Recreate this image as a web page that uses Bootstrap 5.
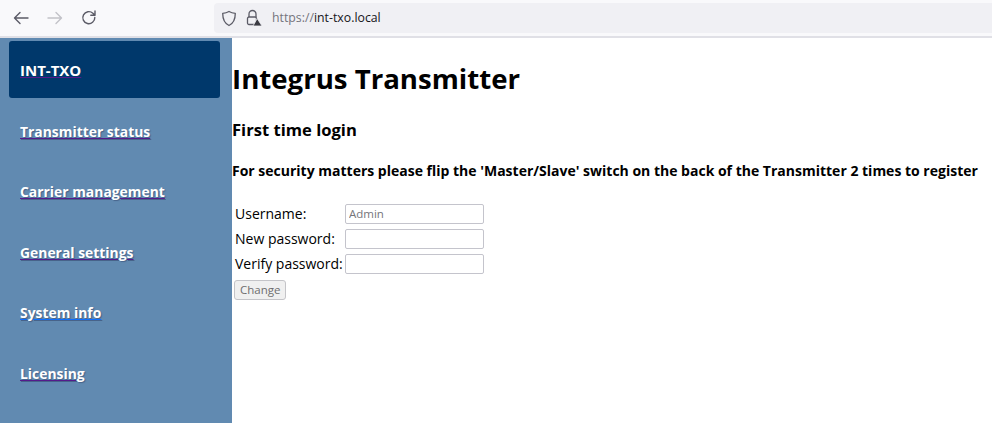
<!DOCTYPE html>
<html lang="en">
  <head>
    <meta charset="UTF-8" />
    <meta name="viewport" content="width=device-width, initial-scale=1" />
    <title>Integrus Transmitter</title>
    <link href="https://cdn.jsdelivr.net/npm/bootstrap@5.3.0/dist/css/bootstrap.min.css" rel="stylesheet" />
    <style>
      /* Overall page and font */
      html, body {
        height: 100%;
        overflow: hidden;
      }
      body {
        background: #fff;
        color: #000;
        font-family: "Open Sans", "Noto Sans", "Liberation Sans", sans-serif;
      }

      /* Browser toolbar on top */
      .browser-bar {
        height: 38px;
        background: #f9f9fb;
        border-bottom: 2px solid #e0e0e6;
        padding-left: 12px;
      }
      .tool-btn {
        width: 18px;
        height: 18px;
        margin-right: 16px;
        flex: none;
      }
      .url-box {
        margin-left: 100px;
        height: 30px;
        flex: 1;
        background: #f0f0f4;
        border-radius: 4px 0 0 4px;
        padding-left: 7px;
        font-size: 12.3px;
      }
      .url-box .scheme {
        color: #74747c;
      }
      .url-box .host {
        color: #15141a;
      }
      .lock-icon {
        margin-right: 10px;
      }

      /* Sidebar */
      .side-col {
        width: 232px;
        background: #618ab1;
        padding: 3px 12px 0 9px;
      }
      .brand-box {
        height: 57px;
        background: #00386b;
        border-radius: 3px;
        padding: 1px 0 0 11px;
      }
      .side-link {
        color: #fff;
        font-size: 13.9px;
        font-weight: 700;
        text-decoration-color: #551a8b;
        text-decoration-thickness: 1px;
        text-shadow: 1px 1px 1px rgba(40, 50, 90, 0.45);
      }
      .side-link:hover {
        color: #fff;
      }
      .brand-box .side-link {
        font-size: 15px;
        text-shadow: none;
      }
      .side-link.fresh {
        text-decoration-color: #0d6efd;
      }
      .side-item {
        height: 60.5px;
        padding-left: 11px;
      }
      .side-list {
        padding-top: 4px;
      }

      /* Main content */
      .main-col {
        flex: 1;
        min-width: 0;
      }
      .main-col h1 {
        font-size: 27.6px;
        font-weight: 700;
        margin: 22px 0 0;
        line-height: 36px;
      }
      .main-col h2 {
        font-size: 16.6px;
        font-weight: 700;
        margin: 23px 0 0;
        line-height: 22px;
      }
      .main-col h3 {
        font-size: 14px;
        font-weight: 700;
        margin: 20px 0 0;
        line-height: 20px;
        white-space: nowrap;
      }
      .login-form {
        margin: 20px 0 0 2px;
        font-size: 14px;
      }
      .form-line {
        height: 25px;
      }
      .form-line label {
        width: 111px;
        padding-left: 1px;
        white-space: nowrap;
      }
      .form-line input {
        width: 139px;
        height: 20px;
        border: 1px solid #c4c4cc;
        border-radius: 2px;
        padding: 0 3px;
        font-size: 11.5px;
        font-family: inherit;
      }
      .form-line input::placeholder {
        color: #75757a;
      }
      .change-btn {
        height: 20px;
        padding: 0 5px;
        margin-top: 4px;
        background: #f0f0f0;
        border: 1px solid #c4c4c8;
        border-radius: 3px;
        color: #6e6e6e;
        font-size: 11.5px;
        font-family: inherit;
      }
    </style>
  </head>
  <body class="d-flex flex-column">
    <!-- Browser toolbar -->
    <div class="browser-bar d-flex align-items-center flex-shrink-0">
      <svg class="tool-btn" viewBox="0 0 18 18" fill="none" stroke="#5b5b66" stroke-width="1.4" stroke-linecap="round" stroke-linejoin="round">
        <path d="M16 9H2.5M8 3.5 2.5 9 8 14.5" />
      </svg>
      <svg class="tool-btn" viewBox="0 0 18 18" fill="none" stroke="#c2c2c8" stroke-width="1.4" stroke-linecap="round" stroke-linejoin="round">
        <path d="M2 9h13.500M10 3.500 15.500 9 10 14.500" />
      </svg>
      <svg class="tool-btn" viewBox="0 0 18 18" fill="none" stroke="#5b5b66" stroke-width="1.4" stroke-linecap="round" stroke-linejoin="round">
        <path d="M14.800 8.500a6 6 0 1 1-1.900-4.200L15 6.200M15 2v4.200h-4.200" />
      </svg>
      <div class="url-box d-flex align-items-center">
        <svg width="16" height="17" viewBox="0 0 16 17" fill="none" stroke="#5b5b66" stroke-width="1.3" stroke-linejoin="round" class="me-2">
          <path d="M8 1.500c2 1.200 4 1.700 6.300 1.800 0 6-1.500 10-6.300 12.200C3.200 13.300 1.700 9.300 1.700 3.300 4 3.200 6 2.700 8 1.500Z" />
        </svg>
        <svg width="17" height="18" viewBox="0 0 17 18" fill="none" class="lock-icon">
          <path d="M4 8V5a3.500 3.500 0 0 1 7 0v3" stroke="#5b5b66" stroke-width="1.300" />
          <rect x="2.500" y="8" width="9" height="7.500" rx="1.500" stroke="#5b5b66" stroke-width="1.300" />
          <path d="M12.200 9.500 17 17H8Z" fill="#3a3a42" stroke="#f0f0f4" stroke-width="0.800" />
        </svg>
        <span><span class="scheme">https://</span><span class="host">int-txo.local</span></span>
      </div>
    </div>

    <div class="d-flex flex-grow-1">
      <!-- Sidebar -->
      <nav class="side-col flex-shrink-0">
        <div class="brand-box d-flex align-items-center">
          <a class="side-link" href="#">INT-TXO</a>
        </div>
        <div class="side-list d-flex flex-column">
          <div class="side-item d-flex align-items-center"><a class="side-link" href="#">Transmitter status</a></div>
          <div class="side-item d-flex align-items-center"><a class="side-link" href="#">Carrier management</a></div>
          <div class="side-item d-flex align-items-center"><a class="side-link" href="#">General settings</a></div>
          <div class="side-item d-flex align-items-center"><a class="side-link fresh" href="#">System info</a></div>
          <div class="side-item d-flex align-items-center"><a class="side-link" href="#">Licensing</a></div>
        </div>
      </nav>

      <!-- Main content -->
      <main class="main-col">
        <h1>Integrus Transmitter</h1>
        <h2>First time login</h2>
        <h3>For security matters please flip the 'Master/Slave' switch on the back of the Transmitter 2 times to register</h3>
        <form class="login-form">
          <div class="form-line d-flex align-items-center">
            <label for="user">Username:</label>
            <input id="user" type="text" placeholder="Admin" />
          </div>
          <div class="form-line d-flex align-items-center">
            <label for="pw1">New password:</label>
            <input id="pw1" type="password" />
          </div>
          <div class="form-line d-flex align-items-center">
            <label for="pw2">Verify password:</label>
            <input id="pw2" type="password" />
          </div>
          <button class="change-btn" type="button">Change</button>
        </form>
      </main>
    </div>

    <script src="https://cdn.jsdelivr.net/npm/bootstrap@5.3.0/dist/js/bootstrap.bundle.min.js"></script>
  </body>
</html>
